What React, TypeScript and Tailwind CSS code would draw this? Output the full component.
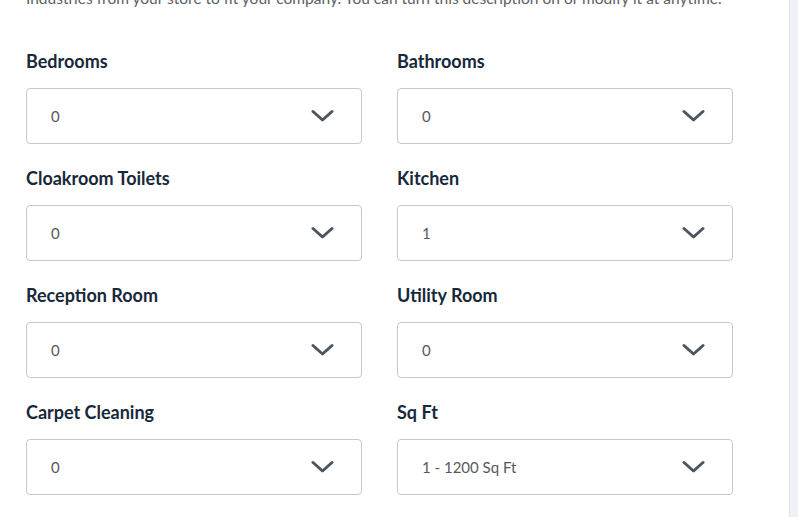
import { FC } from "react";

type field = { label: string; value: string };

const fields: field[] = [
    { label: "Bedrooms", value: "0" },
    { label: "Bathrooms", value: "0" },
    { label: "Cloakroom Toilets", value: "0" },
    { label: "Kitchen", value: "1" },
    { label: "Reception Room", value: "0" },
    { label: "Utility Room", value: "0" },
    { label: "Carpet Cleaning", value: "0" },
    { label: "Sq Ft", value: "1 - 1200 Sq Ft" },
];

const Chevron = () => (
    <svg width="23" height="14" viewBox="0 0 23 14" fill="none">
        <path d="M2 2.5 L11.5 11 L21 2.5" stroke="#4b5661" strokeWidth="3" strokeLinecap="round" strokeLinejoin="round" />
    </svg>
);

const SelectField: FC<{ data: field }> = ({ data }) => {
    return <div className="flex flex-col">
        <p className="text-[18px] leading-[24px] font-bold text-[#17283a]">{data.label}</p>
        {/* select box */}
        <div className="mt-[15px] h-[56px] border border-[#c5c9cd] rounded-[4px] bg-white flex items-center justify-between pl-[24px] pr-[27px]">
            <span className="text-[15px] leading-[20px] text-[#56595c] -mt-px">{data.value}</span>
            <Chevron />
        </div>
    </div>
};

export default function App() {
    return <div className="w-[798px] h-[517px] overflow-hidden bg-white flex" style={{ fontFamily: "Lato, 'Open Sans', sans-serif" }}>
        <div className="w-[789px] pl-[26px] pr-[40px]">
            <p className="mt-[-12px] text-[15.5px] leading-[20px] text-[#5d6064] whitespace-nowrap">
                Industries from your store to fit your company. You can turn this description on or modify it at anytime.
            </p>
            <div className="mt-[41px] grid grid-cols-[336px_336px] gap-x-[35px] gap-y-[22px]">
                {fields.map((f) => <SelectField key={f.label} data={f} />)}
            </div>
        </div>
        {/* scrollbar strip */}
        <div className="w-[9px] h-full bg-[#eef2f7] border-l border-[#dcdfe3]"></div>
    </div>
}
